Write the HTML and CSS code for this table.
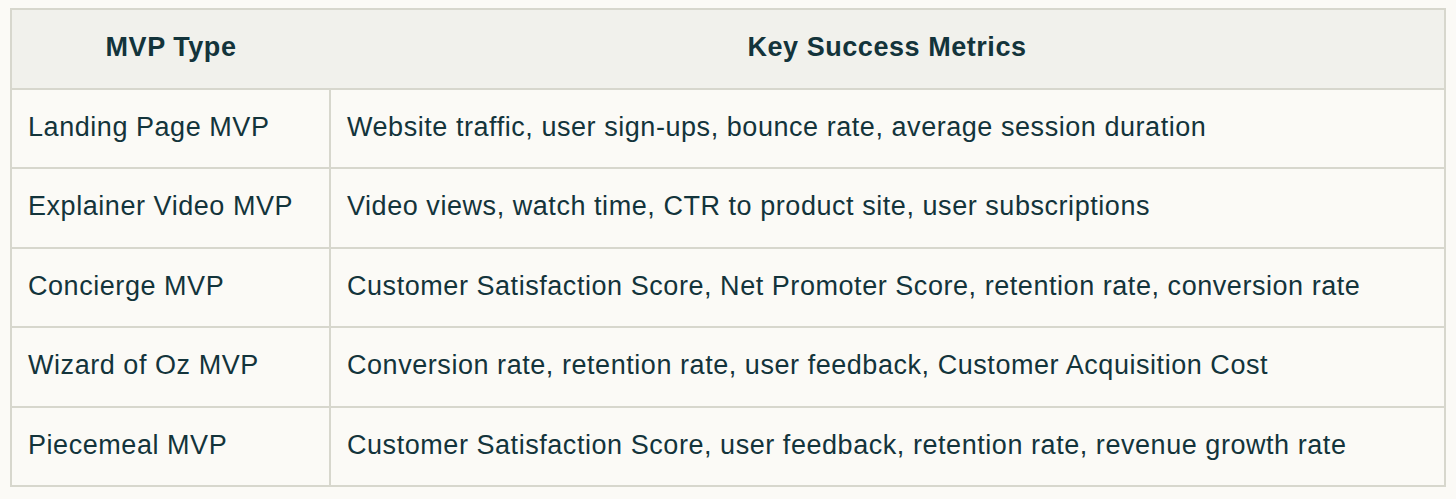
FILE: index.html
```html
<!DOCTYPE html>
<html>
<head>
<meta charset="utf-8">
<link rel="stylesheet" href="styles.css">
</head>
<body>
<table class="metrics">
  <thead>
    <tr>
      <th class="col-type">MVP Type</th>
      <th class="col-metrics">Key Success Metrics</th>
    </tr>
  </thead>
  <tbody>
    <tr><td>Landing Page MVP</td><td>Website traffic, user sign-ups, bounce rate, average session duration</td></tr>
    <tr><td>Explainer Video MVP</td><td>Video views, watch time, CTR to product site, user subscriptions</td></tr>
    <tr><td>Concierge MVP</td><td>Customer Satisfaction Score, Net Promoter Score, retention rate, conversion rate</td></tr>
    <tr><td>Wizard of Oz MVP</td><td>Conversion rate, retention rate, user feedback, Customer Acquisition Cost</td></tr>
    <tr><td>Piecemeal MVP</td><td>Customer Satisfaction Score, user feedback, retention rate, revenue growth rate</td></tr>
  </tbody>
</table>
</body>
</html>
```

FILE: styles.css
```css
html, body {
  margin: 0;
  background: #fbfaf6;
}
body {
  padding: 8px 10px 0 10px;
  font-family: "Liberation Sans", Arial, sans-serif;
  color: #13343b;
}
.metrics {
  width: 1436px;
  border-collapse: collapse;
  border: 2px solid #d7d7cd;
  table-layout: fixed;
}
.metrics th,
.metrics td {
  font-size: 27px;
  letter-spacing: 0.55px;
  height: 75.5px;
  padding: 0 0 2px 16px;
  vertical-align: middle;
  text-align: left;
  border-top: 2px solid #d7d7cd;
  border-bottom: 2px solid #d7d7cd;
  white-space: nowrap;
}
.metrics td:first-child {
  border-right: 2px solid #d7d7cd;
}
.metrics th {
  background: #f1f1ec;
  font-weight: bold;
  text-align: center;
  padding: 0 0 2px 0;
}
.col-type {
  width: 318px;
}
```
